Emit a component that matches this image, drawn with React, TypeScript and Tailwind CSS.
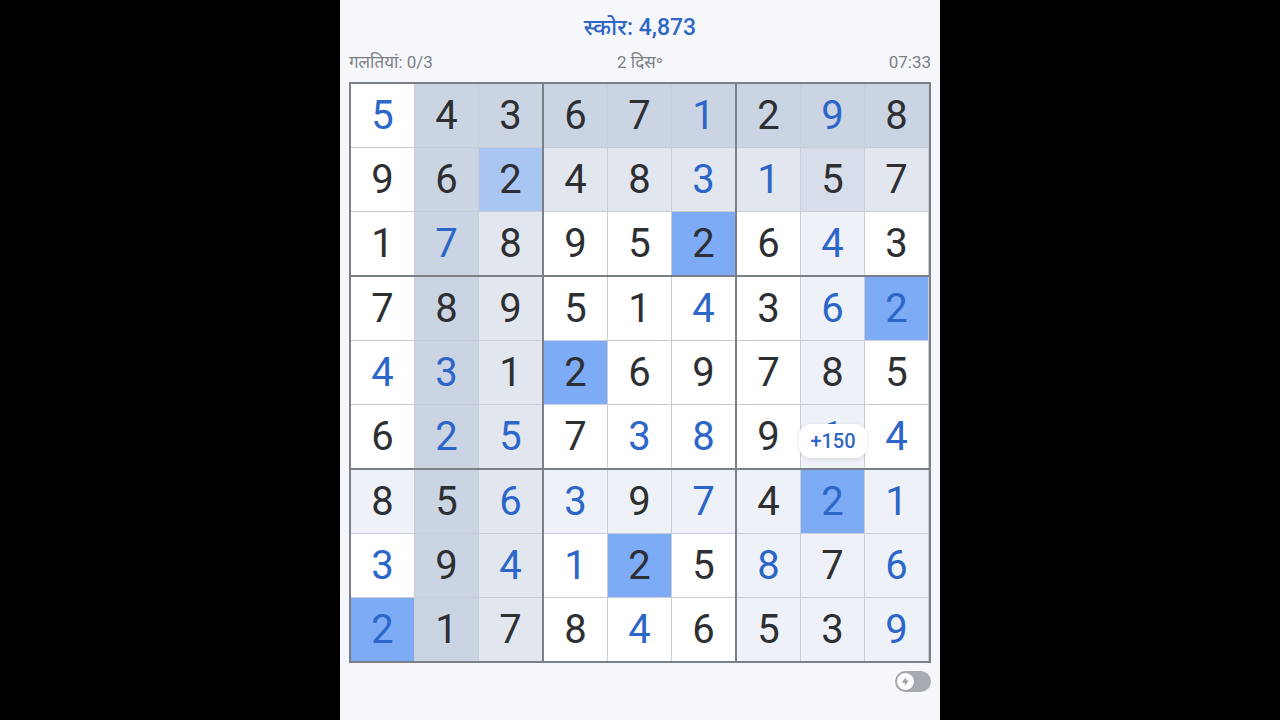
import React from "react";

// cell backgrounds
const W = "bg-white";
const L = "bg-[#eef1f7]";
const M = "bg-[#e1e6ef]";
const N = "bg-[#d8dee9]";
const D = "bg-[#cbd4e3]";
const S = "bg-[#7eabf6]";
const P = "bg-[#a9c5f2]";

const BLUE = "text-[#2b66c8]";
const DARK = "text-[#2d2f33]";

type Cell = { v: string; blue?: boolean; bg: string };

const rows: [string, string][] = [
  ["5b 4 3 6 7 1b 2 9b 8", "W D D D D D D D D"],
  ["9 6 2 4 8 3b 1b 5 7", "W D P M M M M N M"],
  ["1 7b 8 9 5 2 6 4b 3", "W D M W W S W L W"],
  ["7 8 9 5 1 4b 3 6b 2b", "W D M W W W W L S"],
  ["4b 3b 1 2 6 9 7 8 5", "W D M S W W W L W"],
  ["6 2b 5b 7 3b 8b 9 1b 4b", "W D M W W W W L W"],
  ["8 5 6b 3b 9 7b 4 2b 1b", "L D M L L L L S L"],
  ["3b 9 4b 1b 2 5 8b 7 6b", "W D M W S W L L L"],
  ["2b 1 7 8 4b 6 5 3 9b", "S D M W W W L L L"],
];

const bgMap: Record<string, string> = { W, L, M, N, D, S, P };

const grid: Cell[][] = rows.map(([vals, bgs]) => {
  const v = vals.split(" ");
  const b = bgs.split(" ");
  return v.map((x, i) => ({
    v: x.replace("b", ""),
    blue: x.endsWith("b"),
    bg: bgMap[b[i]],
  }));
});

function Box({ br, bc }: { br: number; bc: number }) {
  const cells: Cell[] = [];
  for (let r = 0; r < 3; r++)
    for (let c = 0; c < 3; c++) cells.push(grid[br * 3 + r][bc * 3 + c]);
  return (
    <div className="grid grid-cols-[repeat(3,63px)] grid-rows-[repeat(3,63px)] gap-px bg-[#c9ced6]">
      {cells.map((cell, i) => (
        <div
          key={i}
          className={`${cell.bg} flex items-center justify-center text-[40px] leading-none ${
            cell.blue ? BLUE : DARK
          }`}
        >
          {cell.v}
        </div>
      ))}
    </div>
  );
}

export default function App() {
  return (
    <div className="w-[1280px] h-[720px] bg-black flex justify-center font-['Roboto','Noto_Sans',sans-serif]">
      <div className="w-[600px] h-[720px] bg-[#f6f7fb] flex flex-col pl-[9px] pr-[9px] pt-[14px]">
        {/* Score */}
        <div className="text-center text-[23px] leading-[28px] font-medium text-[#2f67c6]">
          स्कोर: 4,873
        </div>

        {/* Info row */}
        <div className="mt-[10px] flex items-center justify-between text-[17px] leading-[20px] text-[#7b7f86]">
          <span className="w-[120px]">गलतियां: 0/3</span>
          <span>2 दिस॰</span>
          <span className="w-[120px] text-right">07:33</span>
        </div>

        {/* Board */}
        <div className="relative mt-[10px] w-[582px]">
          <div className="grid grid-cols-[191px_191px_192px] gap-[2px] bg-[#7b8088] border-2 border-[#7b8088]">
            {[0, 1, 2].map((br) =>
              [0, 1, 2].map((bc) => <Box key={`${br}-${bc}`} br={br} bc={bc} />)
            )}
          </div>
          <div className="absolute left-[450px] top-[342px] w-[68px] h-[34px] rounded-xl bg-white shadow-[0_1px_4px_rgba(0,0,0,0.12)] flex items-center justify-center text-[20px] font-medium text-[#2f67c6]">
            +150
          </div>
        </div>

        {/* Toggle */}
        <div className="mt-[8px] flex justify-end">
          <div className="w-[36px] h-[21px] rounded-full bg-[#a6abb2] flex items-center pl-[1px]">
            <div className="w-[19px] h-[19px] rounded-full bg-white border border-[#9aa0a8] flex items-center justify-center">
              <svg width="11" height="11" viewBox="0 0 24 24" fill="#8f959d">
                <path d="M13 2 4 14h7l-1 8 9-12h-7l1-8z" />
              </svg>
            </div>
          </div>
        </div>
      </div>
    </div>
  );
}
